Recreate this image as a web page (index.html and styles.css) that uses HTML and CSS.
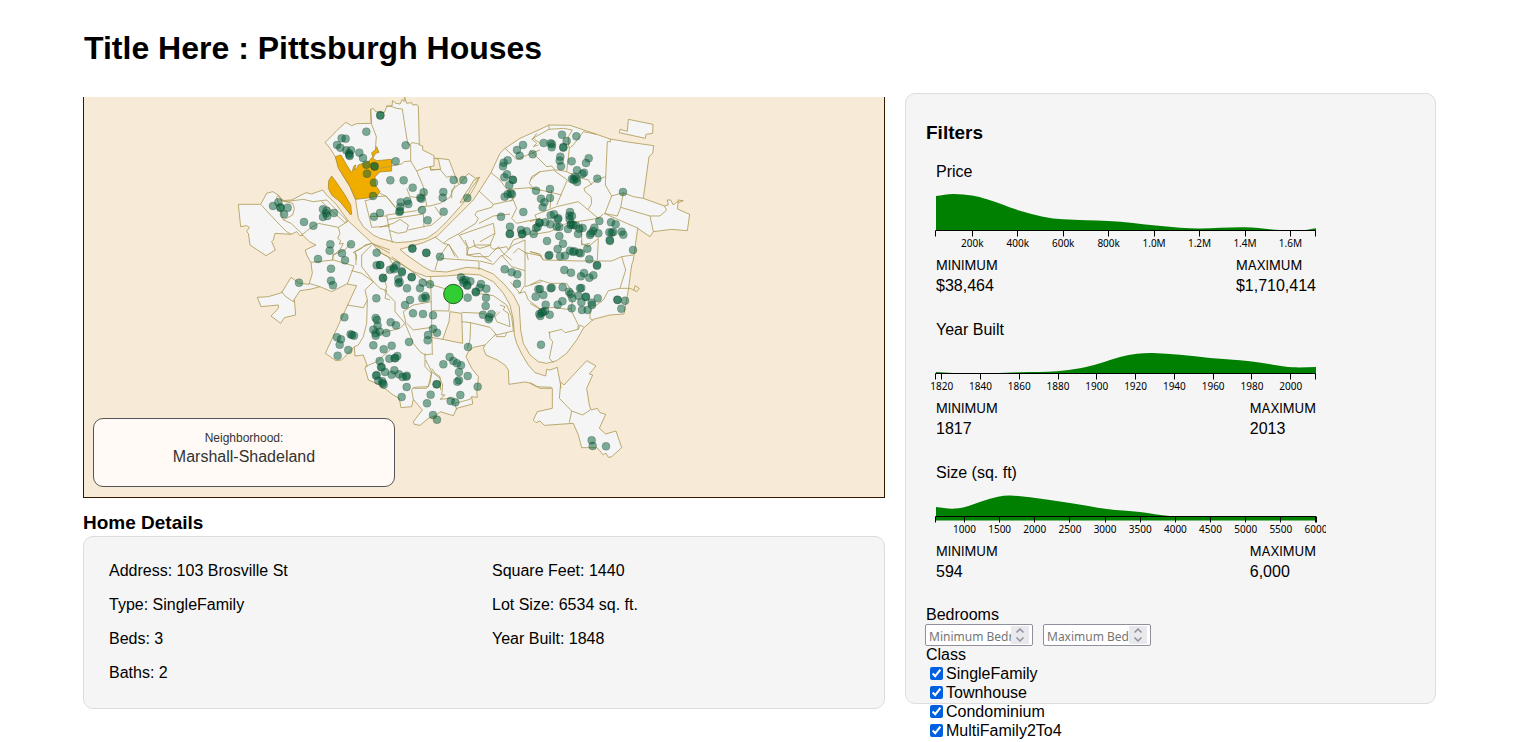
FILE: index.html
```html
<!DOCTYPE html>
<html lang="en">
<head>
<meta charset="utf-8">
<title>Pittsburgh Houses</title>
<link rel="stylesheet" href="styles.css">
</head>
<body>
<div class="page">
<h1 class="title">Title Here : Pittsburgh Houses</h1>
<main class="layout">
<div class="main-column">
<div class="map">
<svg class="map-svg" viewBox="84 97 800 400" role="img" aria-label="Map of Pittsburgh neighborhoods">
<g transform="translate(230 90) scale(.33333)">
<g class="land">
<path d="M285 157L300 143 320 122 347 97 365 107 380 101 424 100 422 58 430 55 437 65 463 68 470 50 480 48 486 48 488 32 498 40 510 42 517 28 522 35 524 22 530 40 545 38 549 46 558 43 565 48 568 165 578 168 578 180 612 197 612 205 625 205 657 209 667 235 680 270 687 285 715 250 737 265 748 262 735 290 715 322 695 345 650 395 620 425 590 445 540 455 500 458 450 445 430 435 400 410 385 385 377 330 360 290 335 250 316 200 300 175Z"/>
<path d="M510 478L580 458 620 440 660 400 730 330 750 300 783 248 810 190 825 175 870 145 930 118 957 105 1020 106 1100 133 1140 147 1200 157 1271 167 1268 190 1257 200 1240 325 1303 348 1315 345 1312 330 1322 330 1330 345 1345 333 1342 357 1379 373 1372 422 1325 418 1270 425 1260 440 1223 415 1210 510 1205 525 1195 600 1182 672 1140 675 1090 688 1060 715 1040 750 1010 790 980 812 950 820 925 815 900 795 880 760 872 720 868 650 850 615 825 585 790 552 750 535 710 532 650 546 605 543 580 530 530 495Z"/>
<path d="M25 343L92 343 110 310 128 305 145 315 155 332 185 330 228 308 245 312 278 300 290 315 320 345 355 393 425 458 450 487 500 515 550 545 590 560 650 558 710 552 750 555 790 575 820 610 840 645 850 690 853 735 860 760 875 792 895 825 915 848 947 858 950 838 960 840 982 832 985 850 990 875 1002 885 1070 812 1098 828 1078 852 1088 855 1070 895 1078 945 1083 960 1102 955 1110 968 1127 973 1108 1015 1127 1032 1158 1023 1175 1073 1145 1100 1135 1102 1128 1090 1118 1094 1110 1082 1100 1073 1055 1073 1045 1035 1030 1000 943 1006 930 993 918 998 910 990 922 965 967 955 967 895 930 895 905 880 885 876 837 883 835 840 825 825 802 810 768 795 760 775 765 765 730 772 715 785 708 800 725 835 745 860 743 890 740 905 742 922 725 920 728 942 680 955 670 977 630 965 620 975 595 985 570 1006 553 1003 550 995 577 960 550 928 545 950 513 953 508 925 490 915 450 885 415 870 405 835 412 828 400 795 375 798 373 770 335 810 318 812 286 790 380 587 350 582 305 605 270 590 240 598 210 602 193 628 197 675 163 683 152 700 123 678 145 655 145 645 93 650 82 622 115 620 155 608 183 562 208 580 237 583 247 550 243 518 230 495 226 480 258 465 238 455 218 435 210 437 200 425 183 433 135 430 130 450 125 455 136 480 108 497 90 485 60 465 55 430 50 425 58 412 50 407 32 410Z"/>
<path d="M1195 88L1269 103 1268 130 1248 133 1246 145 1168 128 1170 118 1192 124Z"/>
</g>
<g class="gap">
<path d="M612 205L625 207 632 238 602 240 600 230 612 228Z"/>
<path d="M748 262L722 298 708 325 700 335 690 338 703 315 720 290 732 270Z"/>
<path d="M660 665L695 670 698 760 638 748 657 695Z"/>
</g>
<g class="chosen">
<path d="M316 200L333 195 350 225 365 248 372 228 378 225 372 240 382 232 385 225 415 215 428 200 425 188 436 180 440 170 447 187 437 190 428 205 440 212 485 208 485 243 450 246 435 260 436 285 450 305 440 320 405 325 377 328 360 290 335 250 325 235Z"/>
<path d="M305 258L296 272 295 295 305 315 330 335 362 375 365 372 362 345 345 315 320 278Z"/>
</g>
<g class="lines">
<path d="M422 58L424 100 439 140 436 180M92 343L140 395 170 425 183 433M145 315L140 322 160 390 183 400 215 430 218 438M145 318L165 335 220 328 250 335 290 330 352 393 345 398 275 335M155 332L188 340 193 355 188 375 163 388M355 393L325 412 265 400 240 415 215 435M325 412L330 430 323 445 332 452 328 462 340 460 330 480 310 495 307 510M405 330L415 370 425 412 480 408M440 320L468 318 495 350M408 332L432 325M420 380L470 378M425 460L405 465 395 475 370 487 380 495 378 510M425 460L480 480"/>
<path transform="translate(450 0)" d="M19 48L30 48 50 55 67 57 75 110 83 160 90 165 95 158 110 160 118 163M92 165L92 213 110 243 135 233 152 230 152 240 180 238 200 262 215 258M92 213L72 215 65 222 50 225 0 235M110 243L130 290 140 348M0 310L20 320 40 345 60 370M20 375L110 362 125 350 150 348 180 340 210 322 225 285M20 375L28 420 37 458M0 412L40 400 60 388 85 405 80 425 55 430 30 422M25 388L130 372 132 412M85 420L155 405 185 380 165 350M80 295L90 320 135 325M235 285L215 300 215 325M375 175L410 208 430 200 480 180M333 248L360 270 400 325 390 335M297 303L340 343 400 330 385 298 450 293 480 300M400 330L410 355 395 385 410 400 480 385M340 343L335 352 290 365 285 375 295 385 287 400M297 400L340 378 390 372M235 432L287 400M235 432L265 475 290 465 330 465 345 430M235 432L205 448 190 460M260 472L262 495 285 500 325 500M240 435L340 400 345 430 300 455M165 440L190 460 208 465 225 500M480 245L455 260 448 280 460 295M480 160L460 145 470 130M330 470L340 478 380 470 385 480 400 450 430 440M325 500L355 470 370 490 395 510M400 490L415 475 440 490 445 510"/>
<path transform="translate(900 0)" d="M57 105V118L35 130 5 147 20 160 10 170 25 165M57 118L100 115 127 120 115 140 115 165 118 175 110 245 85 240 75 240 65 228 50 230 20 200 0 180M160 125L200 133M160 125L130 165 117 175M232 155L226 285 245 318 225 370M240 147L242 155 232 155M226 260L200 270 180 285 162 295 165 305 183 320 185 340 175 358M110 245L145 262 175 270 185 285M0 270L30 245 70 240 112 270 80 345M0 295L40 302 95 315M65 300L60 355M0 395L20 388 15 375 80 350 145 335 205 385M245 318L280 308 310 320 340 325M280 308L272 352 262 378 222 370M272 352L360 378 390 378 410 360 403 348M360 378L370 425M222 370L325 415M205 385L220 372M205 385L110 400 60 425 0 435M155 400V460L175 470 205 445 202 510M0 485L25 492 40 510M445 338L460 332 442 330"/>
<path transform="translate(0 450)" d="M243 67L310 60 372 78 362 105 352 132M237 130L270 140M155 155L165 168 190 185 193 178M310 40L308 60M310 45L345 30 360 10M378 75L378 50 375 35 400 20 425 10 480 40M365 92L395 100 430 125 450 145 470 152M430 125L405 150 412 180 410 250 400 290 385 315 373 320M352 195L400 203 412 180M425 15L395 45 395 80 430 125M470 150L465 175 480 180M405 380L440 365 480 330"/>
<path transform="translate(450 450)" d="M0 38L25 50 40 75 20 100 10 110 20 140 15 155 45 185 45 215 75 250 100 310 120 335 135 345 155 342M35 50L150 133 225 155M152 110L157 345M78 250L70 215 100 195 155 185M155 212L207 213 208 185M80 250L100 270 155 262M75 250L60 265 0 280M155 292L188 298M135 340L135 380 155 400 150 430 140 445 100 445M155 385L165 400 180 410 182 450M280 158L340 167 380 195 395 230 400 272M360 195L375 200 370 210 385 220 390 260 350 245 345 230 360 215M245 217L310 220 330 235 350 215M245 245L272 248 270 300 262 325M272 248L330 262 350 285 403 272M345 280L350 290 375 290 380 280M345 285L315 315M165 90L175 55 205 12 235 55M180 55L297 63 297 90M300 63L340 73 365 45 395 80 435 92M435 0V135L425 150 420 160 390 125M365 50L400 15 435 0M435 38L485 48M435 140L485 125M415 160L435 155 445 180 485 210M255 0L265 25 260 45 300 40 310 50 335 65M280 0L285 20 300 25 335 15"/>
<path transform="translate(900 450)" d="M0 35L30 42 40 60 150 63 245 63 275 50 310 45M275 50L287 90 270 145 235 152 220 180 180 210 180 235 190 242M270 145L300 145 320 155 328 145 315 137 312 150M0 135L30 120 60 130 110 130 120 145 115 165 127 185 123 210 145 255 143 270M0 190L30 208 70 202 110 208 125 205M55 278L95 268 105 278 145 268 150 255 162 262M58 275L60 295 68 305 58 355 70 368M155 0V15L180 10M0 430L20 440 65 442M90 425L93 445"/>
<path transform="translate(390 810)" d="M197 0L215 35 205 80 160 82 155 90 160 118M215 35L240 55 248 75 245 105 255 105 240 118 270 115 285 120M602 70L598 115 635 153 668 165 690 150M635 153L628 188M335 110L330 118 285 130 290 150"/>
</g>
<g class="houses" id="houses"></g>
<circle class="current-house" cx="670" cy="612" r="29"/>
</g>
</svg>
<div class="place">
<div class="place-label">Neighborhood:</div>
<div class="place-name">Marshall-Shadeland</div>
</div>
</div>
<h2 class="heading details-heading">Home Details</h2>
<section class="card details">
<div><p>Address: 103 Brosville St</p><p>Type: SingleFamily</p><p>Beds: 3</p><p>Baths: 2</p></div>
<div><p>Square Feet: 1440</p><p>Lot Size: 6534 sq. ft.</p><p>Year Built: 1848</p></div>
</section>
</div>
<aside class="card filters">
<h2 class="heading filters-heading">Filters</h2>
<section class="filter">
<div class="filter-name">Price</div>
<svg class="chart chart-tall" id="price" role="img" aria-label="Price distribution"></svg>
<div class="range"><div><div class="bound">MINIMUM</div><div class="value">$38,464</div></div><div><div class="bound">MAXIMUM</div><div class="value">$1,710,414</div></div></div>
</section>
<section class="filter">
<div class="filter-name">Year Built</div>
<svg class="chart" id="year" role="img" aria-label="Year built distribution"></svg>
<div class="range"><div><div class="bound">MINIMUM</div><div class="value">1817</div></div><div><div class="bound">MAXIMUM</div><div class="value">2013</div></div></div>
</section>
<section class="filter">
<div class="filter-name">Size (sq. ft)</div>
<svg class="chart" id="size" role="img" aria-label="Size distribution"></svg>
<div class="range"><div><div class="bound">MINIMUM</div><div class="value">594</div></div><div><div class="bound">MAXIMUM</div><div class="value">6,000</div></div></div>
</section>
<div class="group-name">Bedrooms</div>
<div class="bedrooms">
<div class="number"><input type="number" aria-label="Minimum bedrooms" placeholder="Minimum Bedrooms"><svg class="spin" viewBox="0 0 18 18" aria-hidden="true"><path d="M5.500 6.500l3.500-3.500 3.500 3.500M5.500 11.500l3.500 3.500 3.500-3.500"/></svg></div>
<div class="number"><input type="number" aria-label="Maximum bedrooms" placeholder="Maximum Bedrooms"><svg class="spin" viewBox="0 0 18 18" aria-hidden="true"><path d="M5.500 6.500l3.500-3.500 3.500 3.500M5.500 11.500l3.500 3.500 3.500-3.500"/></svg></div>
</div>
<div class="group-name">Class</div>
<label class="option"><input type="checkbox" checked>SingleFamily</label>
<label class="option"><input type="checkbox" checked>Townhouse</label>
<label class="option"><input type="checkbox" checked>Condominium</label>
<label class="option"><input type="checkbox" checked>MultiFamily2To4</label>
</aside>
</main>
</div>
<script src="app.js"></script>
</body>
</html>
```
FILE: styles.css
```css
* { box-sizing: border-box; }
body { margin: 0; min-height: 100vh; background: #fff; color: #000; font: 16px/18px "Liberation Sans", Arial, sans-serif; }
p { margin: 0; }
.page { min-height: 100vh; padding: 30px 83px 0; }
.title { margin: 0 0 27px; padding-left: 1px; font-size: 32px; line-height: 36px; }
.layout { display: grid; grid-template-columns: 802fr 531fr; gap: 20px; align-items: start; }
.main-column { padding-top: 4px; min-width: 0; }
.card { background: #f5f5f5; border: 1px solid #ddd; border-radius: 10px; }
.heading { margin: 0; font-size: 19px; line-height: 22px; }

.map { position: relative; background: #f7ead7; border: 1px solid #331a00; border-top: 0; }
.map-svg { display: block; width: 100%; height: auto; }
.land { fill: #f5f5f5; stroke: #ab9850; stroke-width: 2.4; stroke-linejoin: round; }
.gap { fill: #f7ead7; stroke: #ab9850; stroke-width: 2.4; }
.chosen { fill: #f0ad00; stroke: #ab8a30; stroke-width: 2.4; }
.lines { fill: none; stroke: #ab9850; stroke-width: 2.4; stroke-linejoin: round; }
.houses { fill: #006038; fill-opacity: .5; stroke: #222; stroke-opacity: .3; stroke-width: 2; }
.current-house { fill: #32cd32; stroke: #245c24; stroke-width: 3; }
.place { position: absolute; left: 9px; bottom: 10px; width: 302px; padding: 10px 0 19px; text-align: center; color: #333; background: #fffaf6; border: 1px solid #555; border-radius: 10px; }
.place-label { font-size: 12px; }
.place-name { line-height: 20px; }

.details-heading { margin: 14px 0 2px; }
.details { display: grid; grid-template-columns: 1fr 1fr; gap: 16px; padding: 17px 25px 18px; line-height: 34px; }

.filters { height: calc(100vh - 131px); padding: 28px 20px 0; }
.filters-heading { margin-bottom: 18px; }
.filter { width: 400px; max-width: 100%; margin-bottom: 23px; }
.filter-name { padding-left: 10px; line-height: 20px; }
.chart { display: block; width: 100%; height: 55px; overflow: hidden; }
.chart-tall { height: 70px; }
.area { fill: #008000; }
.axis { fill: none; stroke: #000; }
.tick { font: 10px "Noto Sans", "Open Sans", sans-serif; text-anchor: middle; }
.range { display: flex; justify-content: space-between; padding: 4px 10px 0; }
.bound { font: 13px/19px Inter, sans-serif; }
.value { line-height: 22px; }
.bedrooms { display: flex; gap: 10px; margin-left: -1px; }
.number { display: flex; align-items: center; width: 108px; height: 22px; padding: 0 3px; background: #fff; border: 1px solid #8f8f9d; border-radius: 2px; }
.number input { flex: 1; min-width: 0; height: 18px; padding: 2px 0 0; border: 0; outline: 0; background: none; font: 12px "Noto Sans", "Open Sans", sans-serif; appearance: textfield; }
.number input::-webkit-inner-spin-button { display: none; }
.number input::placeholder { color: #757575; }
.spin { width: 18px; height: 18px; background: #e9e9ed; fill: none; stroke: #8f8f9d; stroke-width: 1.5; }
.option { display: flex; align-items: center; height: 19px; padding-left: 4px; gap: 3px; }
.option input { margin: 0; width: 13px; height: 13px; accent-color: #0060df; }
.group-name { line-height: 18px; }
```
FILE: app.js
```js
const NS = 'http://www.w3.org/2000/svg';
function add(parent, name, attrs, text) {
  const el = document.createElementNS(NS, name);
  for (const key in attrs) el.setAttribute(key, attrs[key]);
  if (text) el.textContent = text;
  parent.appendChild(el);
}

// Listings grouped by map sheet: sheet origin, then positions within it.
const sheets = [
  [0, 0, '451,75;451,77;409,125;335,145;347,146;321,165;331,173;349,181;363,181;357,190;358,195;359,198;388,188;399,204;409,224;433,228;434,230;411,251;432,278;429,318;129,348;145,337;151,352;152,354;173,353;162,373;222,396;250,407;279,358;290,362;288,370;292,378;279,381;312,369;432,380;301,463;299,482;363,463;336,490;264,507;440,488;345,511'],
  [450, 0, '77,166;47,214;31,271;71,271;98,293;131,307;121,323;124,326;82,333;62,337;85,342;60,363;58,366;61,351;0,369;126,360;143,391;191,365;190,306;188,323;221,270;250,270;262,324;97,475;97,476;139,488;139,489;180,500;429,165;411,180;419,197;383,211;371,218;369,229;381,253;373,262;398,269;399,270;388,285;374,320;383,313;396,313;392,310;363,380;430,366;390,410;390,431;389,432;423,420;427,431;426,433;440,424;468,414;479,398'],
  [900, 0, '8,193;41,159;62,160;66,163;65,172;96,134;110,153;100,171;100,173;139,139;91,200;89,212;93,229;125,214;176,205;168,219;141,241;162,248;157,252;134,260;126,267;139,266;141,276;131,270;202,266;18,302;60,297;33,326;60,324;43,337;38,352;279,306;62,376;72,373;85,385;83,388;120,366;118,377;126,378;119,388;124,401;122,405;130,405;138,407;114,417;88,411;80,410;61,403;46,397;28,398;23,411;11,432;88,438;158,414;148,416;144,432;208,393;193,413;189,423;183,430;180,435;205,430;243,397;257,403;275,425;250,426;245,428;238,427;280,434;239,450;240,453;51,453;99,461;83,477;120,482;133,484;129,486;147,488;152,490;58,495;56,497;90,499;105,497;172,476;178,508;309,480'],
  [0, 450, '303,86;303,122;309,136;207,128;440,76;451,75;459,113;459,115;439,175;343,232;437,234;441,240;443,257;430,269;437,280;449,275;437,287;321,292;333,298;329,314;362,283;366,285;372,287;355,330;323,347;430,316;449,363;453,381;465,396;440,405;438,407;445,422;457,424'],
  [450, 450, '49,76;41,83;42,88;30,89;65,94;66,97;55,117;59,127;55,130;95,111;95,112;81,145;128,128;120,145;150,133;136,168;138,174;127,175;90,180;75,195;99,220;129,222;159,226;32,247;48,256;19,279;159,266;171,278;144,285;143,301;87,306;35,317;11,328;28,356;44,355;52,348;46,354;5,382;43,391;35,404;57,403;80,407;68,411;79,410;8,430;11,434;80,441;170,433;0,75;243,112;250,121;257,120;271,124;261,135;262,137;250,128;303,132;299,143;319,146;287,155;288,157;263,173;318,173;317,198;309,224;334,222;328,232;326,238;264,321;190,373;209,351;220,363;231,370;243,376;237,396;263,408;237,421;232,425;293,440;374,88;395,97;412,103;411,131;475,148;478,222'],
  [900, 450, '103,90;123,98;153,109;162,99;178,113;190,106;201,75;201,77;30,147;40,165;17,170;62,145;65,143;98,142;154,144;150,145;117,155;122,162;145,167;127,175;167,170;168,171;203,175;154,187;185,188;186,195;125,205;156,210;173,210;97,184;83,194;47,194;45,213;38,216;31,228;35,218;59,224;33,314;262,179;263,180;285,182;274,206'],
  [390, 810, '125,111;230,73;212,104;201,130;219,165;231,179;272,123;286,127;301,105;695,241;698,258;738,259']
];
const houses = document.getElementById('houses');
for (const [ox, oy, list] of sheets) {
  for (const pair of list.split(';')) {
    const [x, y] = pair.split(',').map(Number);
    add(houses, 'circle', { cx: ox + x, cy: oy + y, r: 12 });
  }
}

// Smooth line through the density points.
function curve(p) {
  let d = `M${p[0]}`;
  for (let i = 0; i < p.length - 1; i++) {
    const a = p[i - 1] || p[i], b = p[i], c = p[i + 1], e = p[i + 2] || c;
    const k = (c[0] - b[0]) / 3;
    const slope = (u, v) => (v[1] - u[1]) / (v[0] - u[0]);
    d += `C${b[0] + k},${b[1] + k * slope(a, c)} ${c[0] - k},${c[1] - k * slope(b, e)} ${c}`;
  }
  return d;
}
function chart(id, axisY, base, points, first, step, labels) {
  const svg = document.getElementById(id);
  add(svg, 'path', { class: 'area', d: `${curve(points)}V${base}H10Z` });
  const ticks = labels.map((_, i) => first + step * i);
  const marks = ticks.map(x => `M${Math.floor(x) + 0.5} ${axisY}v6`).join('');
  add(svg, 'path', { class: 'axis', d: `M9.5 ${axisY + 6}V${axisY}H389.5V${axisY + 6}${marks}` });
  labels.forEach((label, i) => add(svg, 'text', { class: 'tick', x: ticks[i], y: axisY + 16 }, label));
}
chart('price', 48.5, 48.5, [[10,14],[27,12],[46,13.5],[61,17.3],[94,28.7],[117,34.7],[137,37.3],[182,39],[207,41],[227,43.3],[254,45.7],[274,46.5],[319,45.3],[354,48],[376,48.5],[390,46.3]],
  46.3, 45.45, ['200k','400k','600k','800k','1.0M','1.2M','1.4M','1.6M']);
chart('year', 33.5, 33.5, [[10,32],[27,33],[54,33.5],[94,32.3],[131,31.3],[154,28.3],[174,23.3],[194,17],[211,13.7],[227,13],[254,14.7],[284,18],[324,21.3],[347,24.7],[367,27.3],[390,27]],
  15.7, 38.78, ['1820','1840','1860','1880','1900','1920','1940','1960','1980','2000']);
chart('size', 33.5, 37.5, [[10,24],[26,25.7],[39,24],[56,18.3],[72,13.7],[84,12.5],[104,14.3],[144,20],[181,26],[214,29],[244,33],[284,33],[390,33]],
  38.5, 35.15, ['1000','1500','2000','2500','3000','3500','4000','4500','5000','5500','6000']);
```
